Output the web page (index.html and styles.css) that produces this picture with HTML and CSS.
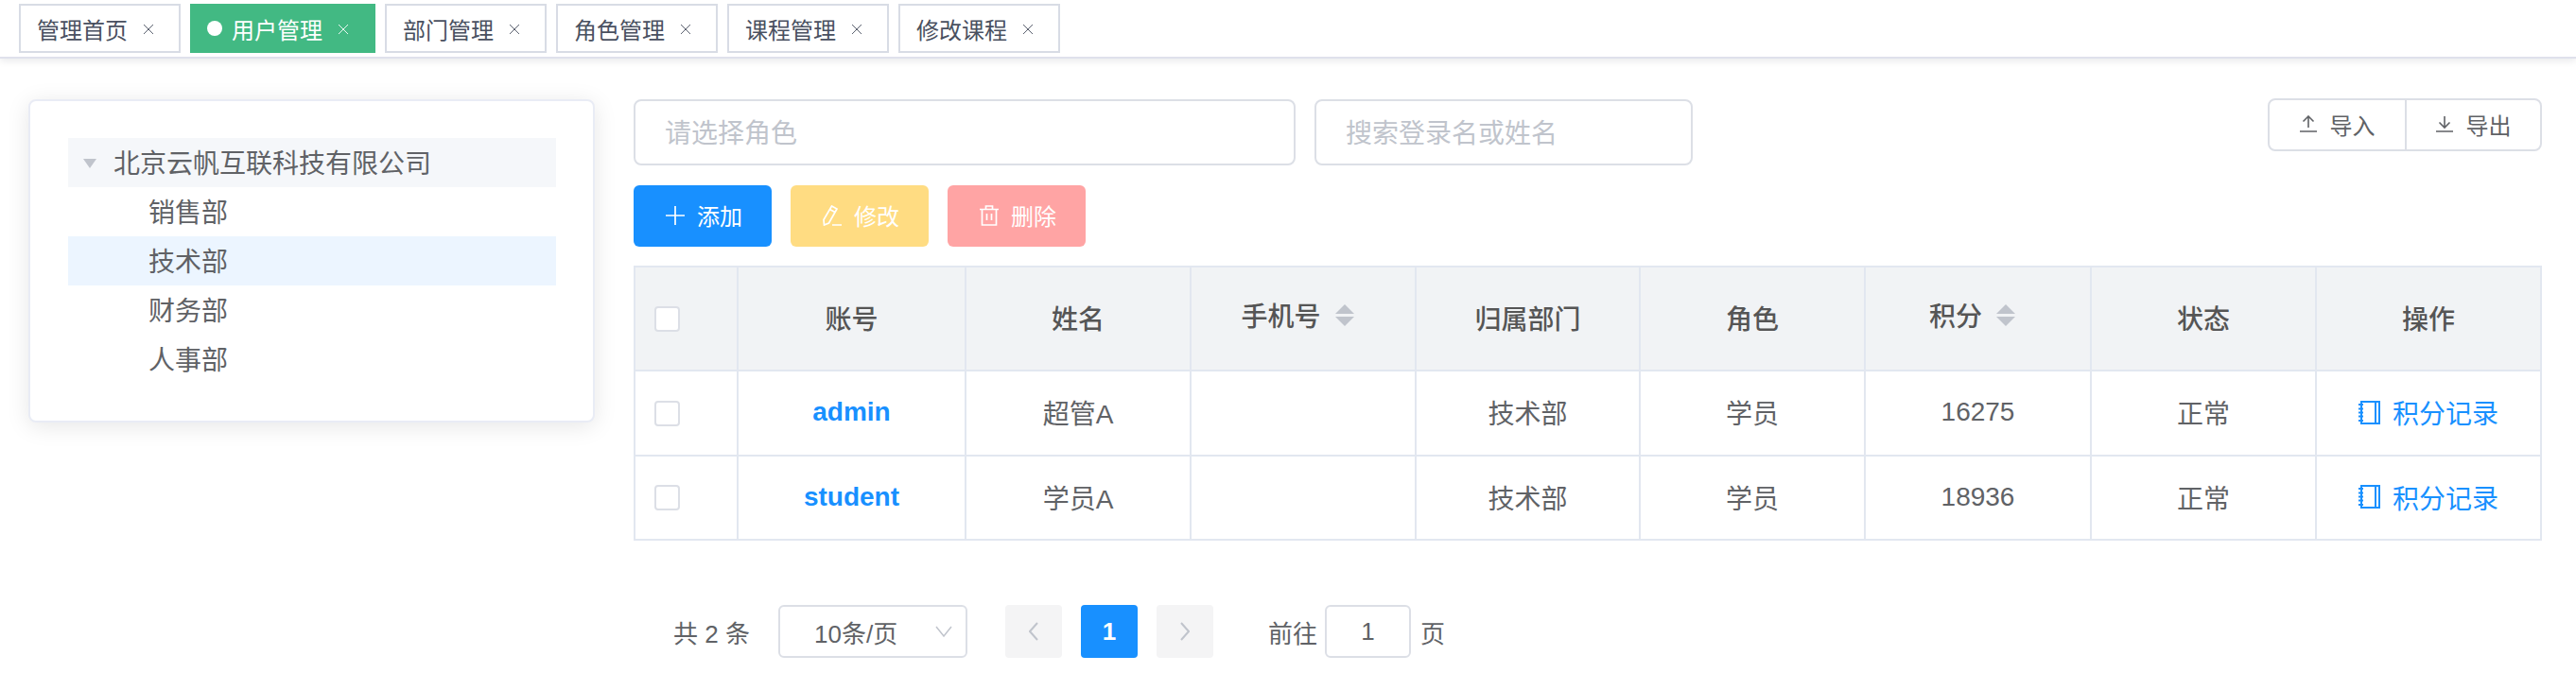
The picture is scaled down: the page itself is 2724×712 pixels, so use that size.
FILE: index.html
```html
<!DOCTYPE html>
<html lang="zh-CN">
<head>
    <meta charset="UTF-8">
    <title>用户管理</title>
    <link rel="stylesheet" href="styles.css">
</head>
<body>
    <div class="tags-bar">
        <div class="tag"><span>管理首页</span><svg class="tag-close" viewBox="0 0 10 10"><path d="M0 0L10 10M10 0L0 10"/></svg></div>
        <div class="tag active"><i class="tag-dot"></i><span>用户管理</span><svg class="tag-close" viewBox="0 0 10 10"><path d="M0 0L10 10M10 0L0 10"/></svg></div>
        <div class="tag"><span>部门管理</span><svg class="tag-close" viewBox="0 0 10 10"><path d="M0 0L10 10M10 0L0 10"/></svg></div>
        <div class="tag"><span>角色管理</span><svg class="tag-close" viewBox="0 0 10 10"><path d="M0 0L10 10M10 0L0 10"/></svg></div>
        <div class="tag"><span>课程管理</span><svg class="tag-close" viewBox="0 0 10 10"><path d="M0 0L10 10M10 0L0 10"/></svg></div>
        <div class="tag"><span>修改课程</span><svg class="tag-close" viewBox="0 0 10 10"><path d="M0 0L10 10M10 0L0 10"/></svg></div>
    </div>

    <div class="main">
        <div class="tree-card">
            <div class="tree-row root"><i class="tree-arrow"></i>北京云帆互联科技有限公司</div>
            <div class="tree-row child">销售部</div>
            <div class="tree-row child current">技术部</div>
            <div class="tree-row child">财务部</div>
            <div class="tree-row child">人事部</div>
        </div>

        <div class="content">
            <div class="search-row">
                <div class="field role-field">请选择角色</div>
                <div class="field name-field">搜索登录名或姓名</div>
                <div class="io-group">
                    <div class="io-btn">
                        <svg class="io-icon" viewBox="0 0 18 18"><path d="M0 17H18M9 13V1M3.500 6.500L9 1L14.500 6.500"/></svg>
                        导入
                    </div>
                    <div class="io-btn">
                        <svg class="io-icon" viewBox="0 0 18 18"><path d="M0 17H18M9 1V13M3.500 7.500L9 13L14.500 7.500"/></svg>
                        导出
                    </div>
                </div>
            </div>

            <div class="action-row">
                <div class="btn btn-add">
                    <svg class="btn-icon" viewBox="0 0 20 22"><path d="M10 1V21M0 11H20"/></svg>
                    添加
                </div>
                <div class="btn btn-edit">
                    <svg class="btn-icon" viewBox="0 0 20 22"><path d="M9.500 1L15 4L6.500 19L1.500 21L1 15.500ZM7.500 4.500L13 7.500M10 21H20"/></svg>
                    修改
                </div>
                <div class="btn btn-del">
                    <svg class="btn-icon" viewBox="0 0 20 22"><path d="M0 4.500H20M6.500 4.500V1H13.500V4.500M2.500 4.500V21H17.500V4.500M7.500 9V16M12.500 9V16"/></svg>
                    删除
                </div>
            </div>

            <table class="user-table">
                <colgroup>
                    <col class="col-check">
                    <col class="col-account">
                    <col class="col-std">
                    <col class="col-std">
                    <col class="col-dept">
                    <col class="col-std">
                    <col class="col-score">
                    <col class="col-std">
                    <col class="col-std">
                </colgroup>
                <thead>
                    <tr>
                        <th class="check-cell"><i class="checkbox"></i></th>
                        <th>账号</th>
                        <th>姓名</th>
                        <th><span class="sortable">手机号<span class="carets"><i class="caret-up"></i><i class="caret-down"></i></span></span></th>
                        <th>归属部门</th>
                        <th>角色</th>
                        <th><span class="sortable">积分<span class="carets"><i class="caret-up"></i><i class="caret-down"></i></span></span></th>
                        <th>状态</th>
                        <th>操作</th>
                    </tr>
                </thead>
                <tbody>
                    <tr class="row-first">
                        <td class="check-cell"><i class="checkbox"></i></td>
                        <td class="account">admin</td>
                        <td>超管A</td>
                        <td></td>
                        <td>技术部</td>
                        <td>学员</td>
                        <td>16275</td>
                        <td>正常</td>
                        <td><span class="record"><svg class="record-icon" viewBox="0 0 23 25"><path d="M3 1H22V24H3ZM18 1V24M0 4H5M0 8.500H5M0 12.500H5M0 16.500H5M0 21H5"/></svg>积分记录</span></td>
                    </tr>
                    <tr class="row-second">
                        <td class="check-cell"><i class="checkbox"></i></td>
                        <td class="account">student</td>
                        <td>学员A</td>
                        <td></td>
                        <td>技术部</td>
                        <td>学员</td>
                        <td>18936</td>
                        <td>正常</td>
                        <td><span class="record"><svg class="record-icon" viewBox="0 0 23 25"><path d="M3 1H22V24H3ZM18 1V24M0 4H5M0 8.500H5M0 12.500H5M0 16.500H5M0 21H5"/></svg>积分记录</span></td>
                    </tr>
                </tbody>
            </table>

            <div class="pager">
                <span class="pager-total">共 2 条</span>
                <div class="pager-size">10条/页<svg class="size-arrow" viewBox="0 0 18 12"><path d="M1 1L9 11L17 1"/></svg></div>
                <div class="pager-btn pager-prev"><svg class="pager-arrow" viewBox="0 0 10 20"><path d="M9 1L1 10L9 19"/></svg></div>
                <div class="pager-num">1</div>
                <div class="pager-btn"><svg class="pager-arrow" viewBox="0 0 10 20"><path d="M1 1L9 10L1 19"/></svg></div>
                <span class="pager-goto">前往</span>
                <div class="pager-input">1</div>
                <span class="pager-unit">页</span>
            </div>
        </div>
    </div>
</body>
</html>
```

FILE: styles.css
```css
* {
    box-sizing: border-box;
}
body {
    margin: 0;
    width: 2724px;
    height: 712px;
    overflow: hidden;
    background: #fff;
    color: #606266;
    font-family: "Liberation Sans", "Noto Sans CJK SC", sans-serif;
}

/* tags */
.tags-bar {
    display: flex;
    gap: 10px;
    height: 62px;
    padding: 4px 20px 0;
    background: #fff;
    border-bottom: 2px solid #dfe1ec;
    box-shadow: 0 2px 8px rgba(0, 21, 41, .1);
}
.tag {
    display: flex;
    align-items: center;
    height: 52px;
    padding: 0 20px 0 17px;
    border: 2px solid #d8dce5;
    color: #495060;
    font-size: 24px;
}
.tag.active {
    padding-left: 16px;
    background: #42b983;
    border-color: #42b983;
    color: #fff;
}
.tag-dot {
    width: 16px;
    height: 16px;
    margin-right: 10px;
    border-radius: 50%;
    background: #fff;
}
.tag-close {
    width: 10px;
    height: 10px;
    margin: 2px 7px 0 17px;
    fill: none;
    stroke: currentColor;
    stroke-width: .9;
}

/* layout */
.main {
    display: flex;
    align-items: flex-start;
    gap: 41px;
    padding: 43px 36px 0 30px;
}
.tree-card {
    flex: none;
    width: 599px;
    height: 342px;
    padding: 39px 39px 39px 40px;
    background: #fff;
    border: 2px solid #e9ecf5;
    border-radius: 8px;
    box-shadow: 0 4px 24px rgba(0, 0, 0, .1);
}
.content {
    flex: 1;
}

/* tree */
.tree-row {
    display: flex;
    align-items: center;
    height: 52px;
    padding-bottom: 3px;
    color: #606266;
    font-size: 28px;
}
.tree-row.root {
    background: #f5f7fa;
    padding-left: 16px;
}
.tree-row.child {
    padding-left: 85px;
}
.tree-row.current {
    background: #ecf5ff;
}
.tree-arrow {
    width: 0;
    height: 0;
    margin: 4px 18px 0 0;
    border-left: 7.500px solid transparent;
    border-right: 7.500px solid transparent;
    border-top: 10px solid #c0c4cc;
}

/* search */
.search-row {
    display: flex;
    align-items: flex-start;
    height: 70px;
}
.field {
    display: flex;
    align-items: center;
    height: 70px;
    padding: 0 0 2px 31px;
    border: 2px solid #dcdfe6;
    border-radius: 8px;
    color: #c0c4cc;
    font-size: 28px;
}
.role-field {
    width: 700px;
}
.name-field {
    width: 400px;
    margin-left: 20px;
}
.io-group {
    display: flex;
    height: 56px;
    margin-top: -1px;
    margin-left: auto;
    border: 2px solid #dcdfe6;
    border-radius: 8px;
}
.io-btn {
    display: flex;
    align-items: center;
    justify-content: center;
    gap: 14px;
    width: 143px;
    padding-bottom: 2px;
    color: #606266;
    font-size: 24px;
}
.io-btn + .io-btn {
    border-left: 2px solid #dcdfe6;
}
.io-icon {
    width: 18px;
    height: 18px;
    fill: none;
    stroke: #606266;
    stroke-width: 1.600;
}

/* buttons */
.action-row {
    display: flex;
    gap: 20px;
    margin-top: 21px;
}
.btn {
    display: flex;
    align-items: center;
    justify-content: center;
    gap: 13px;
    width: 146px;
    height: 65px;
    padding: 0 0 2px 3px;
    border-radius: 6px;
    color: #fff;
    font-size: 24px;
}
.btn-add {
    background: #1890ff;
}
.btn-edit {
    background: #ffdc82;
}
.btn-del {
    background: #ffa4a4;
}
.btn-icon {
    width: 20px;
    height: 22px;
    fill: none;
    stroke: #fff;
    stroke-width: 1.700;
}

/* table */
.user-table {
    width: 2018px;
    margin-top: 20px;
    border-collapse: separate;
    border-spacing: 0;
    border-top: 2px solid #e2e7f0;
    border-left: 2px solid #e2e7f0;
    table-layout: fixed;
    font-size: 28px;
}
.col-check {
    width: 109px;
}
.col-account {
    width: 241px;
}
.col-std {
    width: 238px;
}
.col-dept {
    width: 237px;
}
.col-score {
    width: 239px;
}
.user-table th,
.user-table td {
    padding: 0 0 2px;
    border-right: 2px solid #e2e7f0;
    border-bottom: 2px solid #e2e7f0;
    text-align: center;
}
.user-table th {
    height: 110px;
    background: #f1f3f5;
    color: #555;
    font-weight: 500;
}
.row-first td {
    height: 90px;
}
.row-second td {
    height: 89px;
}
.user-table .check-cell {
    padding: 0 0 0 20px;
    text-align: left;
}
.checkbox {
    display: block;
    width: 27px;
    height: 27px;
    background: #fff;
    border: 2px solid #dcdfe6;
    border-radius: 4px;
}
.user-table .account {
    color: #1890ff;
    font-weight: 700;
}
.sortable {
    display: inline-flex;
    align-items: center;
    gap: 15px;
    margin-right: 12px;
    position: relative;
    top: -3px;
}
.carets {
    display: flex;
    flex-direction: column;
    gap: 3px;
}
.caret-up,
.caret-down {
    display: block;
    width: 0;
    height: 0;
    border-left: 10px solid transparent;
    border-right: 10px solid transparent;
}
.caret-up {
    border-bottom: 10px solid #c0c4cc;
}
.caret-down {
    border-top: 10px solid #c0c4cc;
}
.record {
    display: inline-flex;
    align-items: center;
    gap: 13px;
    color: #1890ff;
}
.record-icon {
    width: 23px;
    height: 25px;
    fill: none;
    stroke: #1890ff;
    stroke-width: 2;
}

/* pagination */
.pager {
    display: flex;
    align-items: center;
    height: 56px;
    margin-top: 68px;
    padding-left: 42px;
    color: #606266;
    font-size: 26px;
}
.pager-total {
    width: 111px;
}
.pager-size {
    display: flex;
    align-items: center;
    justify-content: space-between;
    width: 200px;
    height: 56px;
    padding: 0 14px 0 36px;
    border: 2px solid #dcdfe6;
    border-radius: 6px;
}
.size-arrow {
    width: 18px;
    height: 12px;
    fill: none;
    stroke: #c0c4cc;
    stroke-width: 1.500;
}
.pager-btn,
.pager-num {
    display: flex;
    align-items: center;
    justify-content: center;
    width: 60px;
    height: 56px;
    border-radius: 4px;
    background: #f4f4f5;
}
.pager-prev {
    margin-left: 40px;
}
.pager-num {
    margin: 0 20px;
    background: #1890ff;
    color: #fff;
    font-weight: 700;
}
.pager-arrow {
    width: 10px;
    height: 20px;
    fill: none;
    stroke: #c0c4cc;
    stroke-width: 2;
}
.pager-goto {
    margin-left: 58px;
}
.pager-input {
    display: flex;
    align-items: center;
    justify-content: center;
    width: 91px;
    height: 56px;
    margin: 0 10px 0 8px;
    border: 2px solid #dcdfe6;
    border-radius: 6px;
}
```
